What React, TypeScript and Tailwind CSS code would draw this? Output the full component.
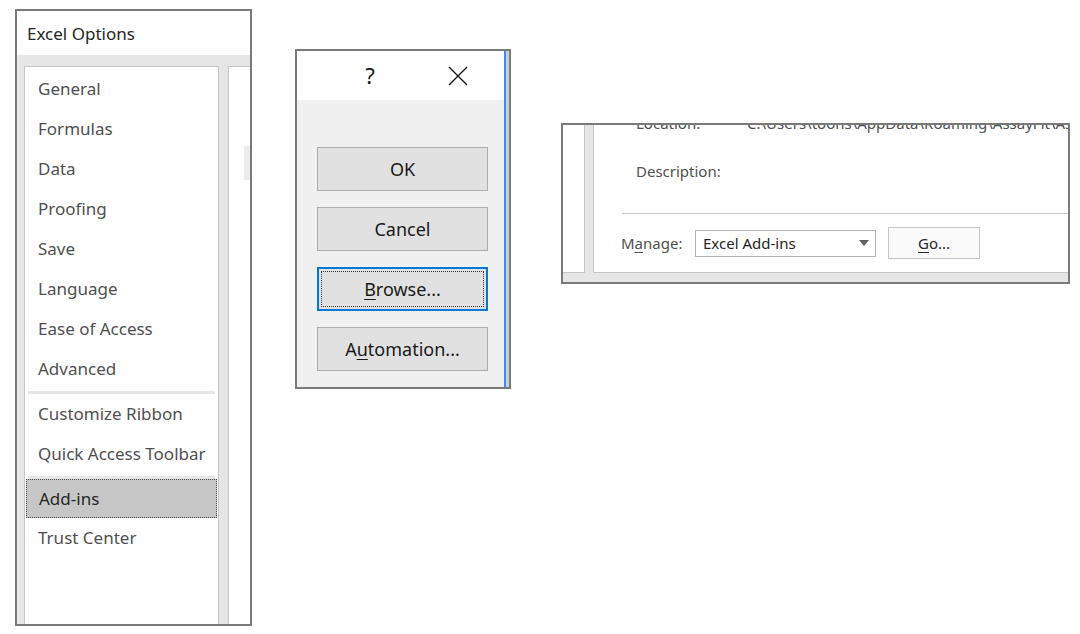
import React from 'react'

const font = { fontFamily: '"Noto Sans", "Open Sans", "Liberation Sans", sans-serif' }

const topItems = ['General', 'Formulas', 'Data', 'Proofing', 'Save', 'Language', 'Ease of Access', 'Advanced']
const midItems = ['Customize Ribbon', 'Quick Access Toolbar']

function Separator() {
  return (
    <div className="h-[5px] flex items-end px-[3px]">
      <div className="h-[3px] w-full bg-[#e6e6e6]" />
    </div>
  )
}

function NavItem({ label }: { label: string }) {
  return (
    <div className="h-[40px] flex items-center pl-[13px] text-[17px] text-[#505050]">{label}</div>
  )
}

function OptionsPanel() {
  return (
    <div className="ml-[15px] mt-[9px] w-[237px] h-[617px] border-2 border-[#7a7a7a] flex flex-col bg-white shrink-0">
      <div className="h-[44px] flex items-center pl-[10px] pt-px text-[17px] text-[#262626]">Excel Options</div>
      <div className="flex-1 bg-[#e6e6e6] pt-[11px] pl-[7px] flex min-h-0">
        <div className="w-[195px] bg-white border-l border-r border-t border-[#c6c6c6] pt-[2px] flex flex-col">
          {topItems.map((t) => (
            <NavItem key={t} label={t} />
          ))}
          <Separator />
          {midItems.map((t) => (
            <NavItem key={t} label={t} />
          ))}
          <Separator />
          <div className="h-[39px] mx-px bg-[#c6c6c6] border border-dotted border-[#4a4a4a] flex items-center pl-[12px] text-[17px] text-[#262626]">
            Add-ins
          </div>
          <NavItem label="Trust Center" />
        </div>
        <div className="ml-[9px] flex-1 bg-white border-l border-t border-[#c6c6c6] flex justify-end pt-[79px]">
          <div className="w-[6px] h-[34px] bg-[#ececec]" />
        </div>
      </div>
    </div>
  )
}

function DialogButton({ children, focused }: { children: React.ReactNode; focused?: boolean }) {
  return (
    <div
      className={
        focused
          ? 'h-[44px] w-[171px] bg-[#e1e1e1] border-2 border-[#0078d7] p-[2px]'
          : 'h-[44px] w-[171px] bg-[#e1e1e1] border border-[#adadad]'
      }
    >
      <div
        className={
          focused
            ? 'h-full w-full border border-dotted border-[#333] flex items-center justify-center text-[18px] text-[#1a1a1a]'
            : 'h-full w-full flex items-center justify-center text-[18px] text-[#1a1a1a]'
        }
      >
        {children}
      </div>
    </div>
  )
}

function AddinsDialog() {
  return (
    <div className="ml-[43px] mt-[49px] w-[216px] h-[340px] border-2 border-[#7a7a7a] flex shrink-0">
      <div className="flex-1 flex flex-col">
        <div className="h-[49px] bg-white flex items-center">
          <div className="ml-[50px] w-[46px] text-center text-[22px] text-[#1a1a1a]">?</div>
          <div className="ml-[42px] w-[46px] flex justify-center">
            <svg width="20" height="20" viewBox="0 0 20 20" fill="none" stroke="#1a1a1a" strokeWidth="1.4">
              <path d="M1 1 L19 19 M19 1 L1 19" />
            </svg>
          </div>
        </div>
        <div className="flex-1 bg-[#f0f0f0] pt-[47px] pl-[20px] flex flex-col gap-[16px]">
          <DialogButton>OK</DialogButton>
          <DialogButton>Cancel</DialogButton>
          <DialogButton focused>
            <span>
              <span className="underline underline-offset-[3px]">B</span>rowse...
            </span>
          </DialogButton>
          <DialogButton>
            <span>
              A<span className="underline underline-offset-[3px]">u</span>tomation...
            </span>
          </DialogButton>
        </div>
      </div>
      <div className="w-[2px] bg-[#3c8ee0]" />
      <div className="w-[3px] bg-[#cfcfcf]" />
    </div>
  )
}

function ManagePanel() {
  return (
    <div className="ml-[50px] mt-[123px] w-[509px] h-[161px] border-2 border-[#7a7a7a] flex flex-col shrink-0 bg-[#e6e6e6]">
      <div className="flex-1 flex min-h-0">
        <div className="w-[22px] bg-white border-r border-b border-[#c6c6c6]" />
        <div className="w-[8px]" />
        <div className="flex-1 bg-white border-l border-b border-[#c6c6c6] overflow-hidden flex flex-col text-[15px] text-[#505050]">
          <div className="-mt-[12px] h-[20px] flex items-center pl-[42px] whitespace-nowrap">
            <span className="w-[111px] shrink-0">Location:</span>
            <span className="shrink-0">C:\Users\toons\AppData\Roaming\AssayFit\AssayFit.xlam</span>
          </div>
          <div className="mt-[28px] h-[20px] flex items-center pl-[42px]">Description:</div>
          <div className="mt-[32px] ml-[28px] h-px bg-[#c6c6c6]" />
          <div className="mt-[13px] h-[32px] flex items-center pl-[27px]">
            <span className="w-[74px] shrink-0">
              M<span className="underline underline-offset-[3px]">a</span>nage:
            </span>
            <div className="w-[181px] h-[27px] bg-white border border-[#b4b4b4] flex items-center pl-[7px] pr-[6px] text-[#262626]">
              <span className="flex-1">Excel Add-ins</span>
              <svg width="10" height="6" viewBox="0 0 10 6">
                <path d="M0 0 L10 0 L5 6 Z" fill="#606060" />
              </svg>
            </div>
            <div className="ml-[12px] w-[92px] h-[32px] bg-[#fbfbfb] border border-[#c6c6c6] flex items-center justify-center text-[#262626]">
              <span>
                <span className="underline underline-offset-[3px]">G</span>o...
              </span>
            </div>
          </div>
        </div>
      </div>
      <div className="h-[9px]" />
    </div>
  )
}

export default function App() {
  return (
    <div className="w-[1080px] h-[634px] bg-white overflow-hidden flex items-start" style={font}>
      <OptionsPanel />
      <AddinsDialog />
      <ManagePanel />
    </div>
  )
}
